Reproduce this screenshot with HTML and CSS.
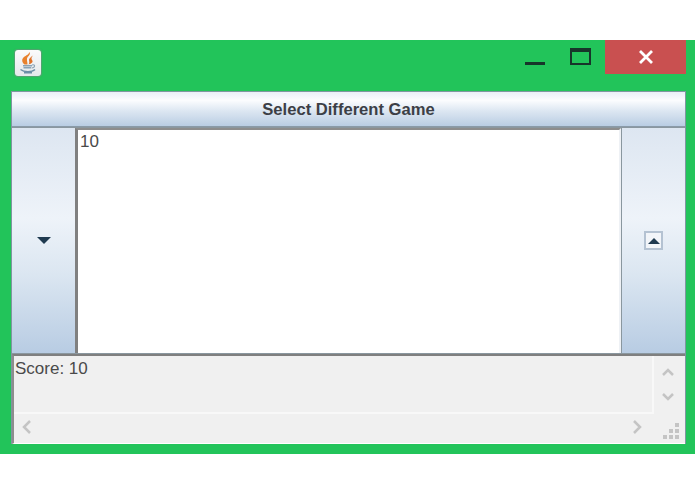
FILE: index.html
```html
<!DOCTYPE html>
<html lang="en">
<head>
    <meta charset="UTF-8">
    <title>Select Different Game</title>
    <link rel="stylesheet" href="styles.css">
</head>
<body>
    <div class="window">
        <div class="titlebar">
            <div class="app-icon">
                <svg width="20" height="22" viewBox="0 0 20 22">
                    <path d="M11.500 0 C13 3 9.500 4 9 6.500 C8.700 8.500 9.500 10 9.500 12.500 L6.500 12.500 C4 10.500 3.500 8 5 6 C6.800 3.800 10.500 3 11.500 0 Z" fill="#e8812c"/>
                    <path d="M15 3.500 C13 5 11 6.200 11 8 C11 9.500 12 10.500 10.500 12.500 C14 11.500 15.500 9.800 14 8 C13 6.500 13.500 5 15 3.500 Z" fill="#e0732a"/>
                    <path d="M5 13.800 H14 M5.500 15.800 H13" stroke="#8aa3b5" stroke-width="1.400" fill="none"/>
                    <path d="M14 13 C17.500 12 17.500 15.500 13.500 16" stroke="#8aa3b5" stroke-width="1.100" fill="none"/>
                    <path d="M2.500 17.500 C6 20.500 14 20.500 17 17.500 M6 20.800 H14" stroke="#6b8ea6" stroke-width="1.400" fill="none"/>
                </svg>
            </div>
            <div class="controls">
                <div class="minimize"></div>
                <div class="maximize"></div>
                <div class="close">
                    <svg width="16" height="14" viewBox="0 0 16 14">
                        <path d="M2 1 L14 13 M14 1 L2 13" stroke="#fff" stroke-width="2.800" fill="none"/>
                    </svg>
                </div>
            </div>
        </div>
        <div class="content">
            <button class="game-btn">Select Different Game</button>
            <div class="middle">
                <div class="side-btn">
                    <svg width="14" height="7" viewBox="0 0 14 7"><path d="M0 0 H14 L7 7 Z" fill="#1f3a50"/></svg>
                </div>
                <div class="number-area">10</div>
                <div class="side-btn">
                    <div class="up-box">
                        <svg width="12" height="6" viewBox="0 0 12 6"><path d="M0 6 H12 L6 0 Z" fill="#1f3a50"/></svg>
                    </div>
                </div>
            </div>
            <div class="score-pane">
                <div class="score-top">
                    <div class="score-text">Score: 10</div>
                    <div class="vscroll">
                        <svg width="14" height="10" viewBox="0 0 14 10"><path d="M2 8 L7 3 L12 8" stroke="#c4c4c4" stroke-width="2.500" fill="none"/></svg>
                        <svg width="14" height="10" viewBox="0 0 14 10"><path d="M2 2 L7 7 L12 2" stroke="#c4c4c4" stroke-width="2.500" fill="none"/></svg>
                    </div>
                </div>
                <div class="hscroll">
                    <svg width="12" height="16" viewBox="0 0 12 16"><path d="M9 2 L3 8 L9 14" stroke="#c4c4c4" stroke-width="2.500" fill="none"/></svg>
                    <svg width="12" height="16" viewBox="0 0 12 16"><path d="M3 2 L9 8 L3 14" stroke="#c4c4c4" stroke-width="2.500" fill="none"/></svg>
                    <div class="grip">
                        <span></span><span></span><span></span><span></span><span></span><span></span>
                    </div>
                </div>
            </div>
        </div>
    </div>
</body>
</html>
```

FILE: styles.css
```css
body {
    margin: 0;
    background: #ffffff;
    font-family: "Liberation Sans", Arial, sans-serif;
}
.window {
    margin-top: 40px;
    height: 414px;
    background: #22c45a;
    box-sizing: border-box;
    padding: 0 9px 10px 11px;
    display: flex;
    flex-direction: column;
}
.titlebar {
    height: 51px;
    flex: none;
    display: flex;
    justify-content: space-between;
    align-items: flex-start;
}
.app-icon {
    width: 26px;
    height: 26px;
    margin: 10px 0 0 4px;
    background: linear-gradient(to bottom, #fbfbfb, #e4e8ea);
    border-radius: 3px;
    box-shadow: 0 0 1px 1px rgba(120, 140, 130, 0.6);
    display: flex;
    align-items: center;
    justify-content: center;
}
.controls {
    display: flex;
}
.minimize {
    width: 20px;
    height: 3px;
    background: #17352a;
    margin: 22px 25px 0 0;
}
.maximize {
    width: 17px;
    height: 11px;
    border: 2px solid #17352a;
    border-top-width: 4px;
    margin: 8px 14px 0 0;
}
.close {
    width: 81px;
    height: 34px;
    background: #c95050;
    display: flex;
    align-items: flex-start;
    justify-content: center;
    padding-top: 10px;
    box-sizing: border-box;
}
.content {
    flex: 1;
    display: flex;
    flex-direction: column;
    border-left: 1px solid #7f96a0;
    border-right: 1px solid #7f96a0;
    border-top: 1px solid #7f96a0;
    background: #8a979f;
}
.game-btn {
    height: 35px;
    flex: none;
    padding: 1px 0 0;
    border: none;
    border-bottom: 1px solid #8a9aa8;
    background: linear-gradient(to bottom, #e9eff7 0%, #fbfcfe 25%, #dde7f2 55%, #b9cde3 100%);
    font-family: "Liberation Sans", Arial, sans-serif;
    font-size: 16.6px;
    font-weight: bold;
    color: #3c3f46;
}
.middle {
    height: 225px;
    flex: none;
    margin-top: 1px;
    display: flex;
}
.side-btn {
    width: 63px;
    flex: none;
    background: linear-gradient(to bottom, #dde6f1 0%, #eef3f9 40%, #dbe6f1 65%, #b8cce3 100%);
    display: flex;
    align-items: center;
    justify-content: center;
}
.number-area {
    flex: 1;
    background: #ffffff;
    border-top: 2px solid #8d8d8d;
    border-left: 3px solid #808080;
    border-right: 2px solid #eef1f5;
    margin-right: 1px;
    padding: 2px 0 0 2px;
    font-size: 17px;
    line-height: 20px;
    color: #4a4a4a;
}
.up-box {
    width: 19px;
    height: 19px;
    border: 2px solid #b4c2d2;
    box-sizing: border-box;
    display: flex;
    align-items: center;
    justify-content: center;
    background: #f2f5f9;
}
.score-pane {
    flex: 1;
    margin-top: 1px;
    background: #f0f0f0;
    border-top: 2px solid #7f7f7f;
    border-left: 2px solid #8d8d8d;
    border-bottom: 1px solid #ffffff;
    display: flex;
    flex-direction: column;
}
.score-top {
    height: 58px;
    flex: none;
    display: flex;
}
.score-text {
    flex: 1;
    padding: 3px 0 0 1px;
    font-size: 17px;
    line-height: 20px;
    color: #4a4a4a;
    border-right: 2px solid #f8f8f8;
    border-bottom: 2px solid #f8f8f8;
}
.vscroll {
    width: 31px;
    flex: none;
    display: flex;
    flex-direction: column;
    align-items: center;
    gap: 15px;
    padding: 11px 3px 0 0;
    box-sizing: border-box;
}
.hscroll {
    flex: 1;
    display: flex;
    align-items: center;
    padding: 0 0 4px 7px;
    position: relative;
}
.hscroll svg:nth-child(2) {
    margin-left: 598px;
}
.grip {
    position: absolute;
    right: 5px;
    bottom: 5px;
    width: 17px;
    height: 15px;
    display: grid;
    grid-template-columns: repeat(3, 4px);
    grid-template-rows: repeat(3, 4px);
    gap: 2px;
}
.grip span {
    background: #c4c4c4;
}
.grip span:nth-child(1) {
    grid-column: 3;
    grid-row: 1;
}
.grip span:nth-child(2) {
    grid-column: 2;
    grid-row: 2;
}
.grip span:nth-child(3) {
    grid-column: 3;
    grid-row: 2;
}
.grip span:nth-child(4) {
    grid-column: 1;
    grid-row: 3;
}
.grip span:nth-child(5) {
    grid-column: 2;
    grid-row: 3;
}
.grip span:nth-child(6) {
    grid-column: 3;
    grid-row: 3;
}
```
